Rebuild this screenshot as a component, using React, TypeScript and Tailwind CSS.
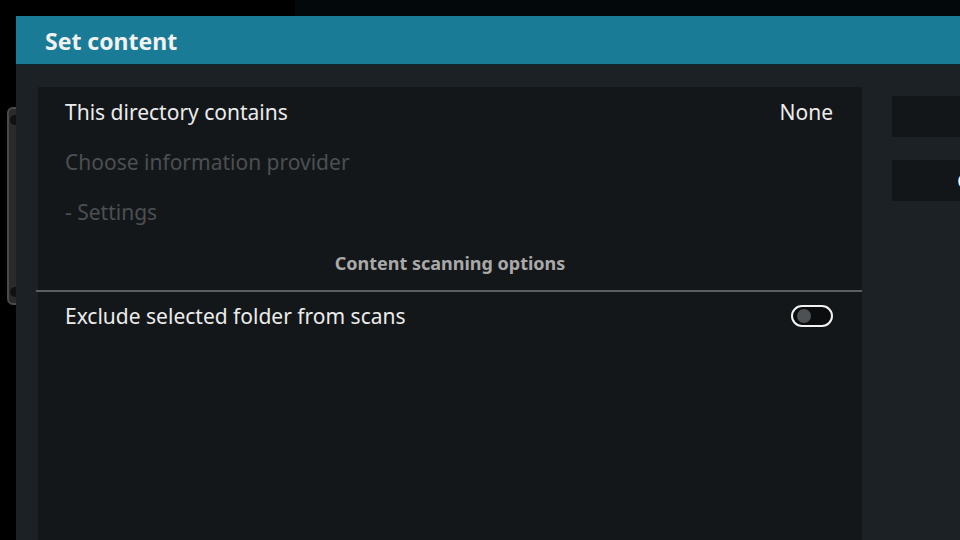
export default function App() {
  const rows = [
    { label: 'This directory contains', value: 'None', enabled: true },
    { label: 'Choose information provider', value: '', enabled: false },
    { label: '- Settings', value: '', enabled: false },
  ];

  return (
    <div className="relative w-[960px] h-[540px] overflow-hidden bg-black font-['Noto_Sans',sans-serif]">
      {/* background strip behind the dialog */}
      <div className="absolute left-[295px] top-0 right-0 h-[16px] bg-[#03080a]" />
      {/* partly hidden control on the left, behind the dialog */}
      <div className="absolute left-[7px] top-[107px] w-[20px] h-[198px] rounded-[6px] border-2 border-[#4a4a4a] bg-[#2a2a2a]">
        <div className="absolute left-[1px] top-[6px] w-[10px] h-[10px] rounded-full bg-[#111]" />
        <div className="absolute left-[1px] bottom-[6px] w-[10px] h-[10px] rounded-full bg-[#111]" />
      </div>

      <div className="relative ml-[16px] mt-[16px] h-[524px] flex flex-col bg-[#1b2124]">
        {/* header */}
        <div className="h-[49px] shrink-0 flex items-center px-[29px] pt-[2px] bg-[#1a7b96] border-b border-[#0d2a31]">
          <span className="text-[23px] font-bold text-[#f1f1f1] leading-none">Set content</span>
        </div>

        <div className="flex flex-1 pl-[22px] pt-[22px] gap-[30px]">
          {/* settings list */}
          <div className="w-[824px] shrink-0 flex flex-col bg-[#141719]">
            {rows.map((r) => (
              <div key={r.label} className="h-[50px] flex items-center justify-between pl-[27px] pr-[29px] pt-[2px]">
                <span className={`text-[21px] ${r.enabled ? 'text-[#ececec]' : 'text-[#4b4f52]'}`}>{r.label}</span>
                {r.value && <span className="text-[21px] text-[#ececec]">{r.value}</span>}
              </div>
            ))}
            <div className="h-[53px] flex items-center justify-center">
              <span className="text-[18px] font-bold text-[#a9a9a9]">Content scanning options</span>
            </div>
            <div className="h-[2px] -ml-[2px] bg-[#5b5f61]" />
            <div className="h-[48px] flex items-center justify-between pl-[27px] pr-[29px]">
              <span className="text-[21px] text-[#ececec] pt-[2px]">Exclude selected folder from scans</span>
              <div className="w-[42px] h-[22px] rounded-full border-2 border-[#f2f2f2] bg-[#0b0d0e] flex items-center pl-[4px]">
                <div className="w-[14px] h-[14px] rounded-full bg-[#4e5153]" />
              </div>
            </div>
          </div>

          {/* side buttons */}
          <div className="flex-1 flex flex-col gap-[23px] pt-[9px]">
            <div className="h-[41px] bg-[#131618]" />
            <div className="h-[41px] bg-[#131618] flex items-center justify-end overflow-hidden">
              <span className="text-[20px] font-bold text-white -mr-[10px]">C</span>
            </div>
          </div>
        </div>
      </div>
    </div>
  );
}
